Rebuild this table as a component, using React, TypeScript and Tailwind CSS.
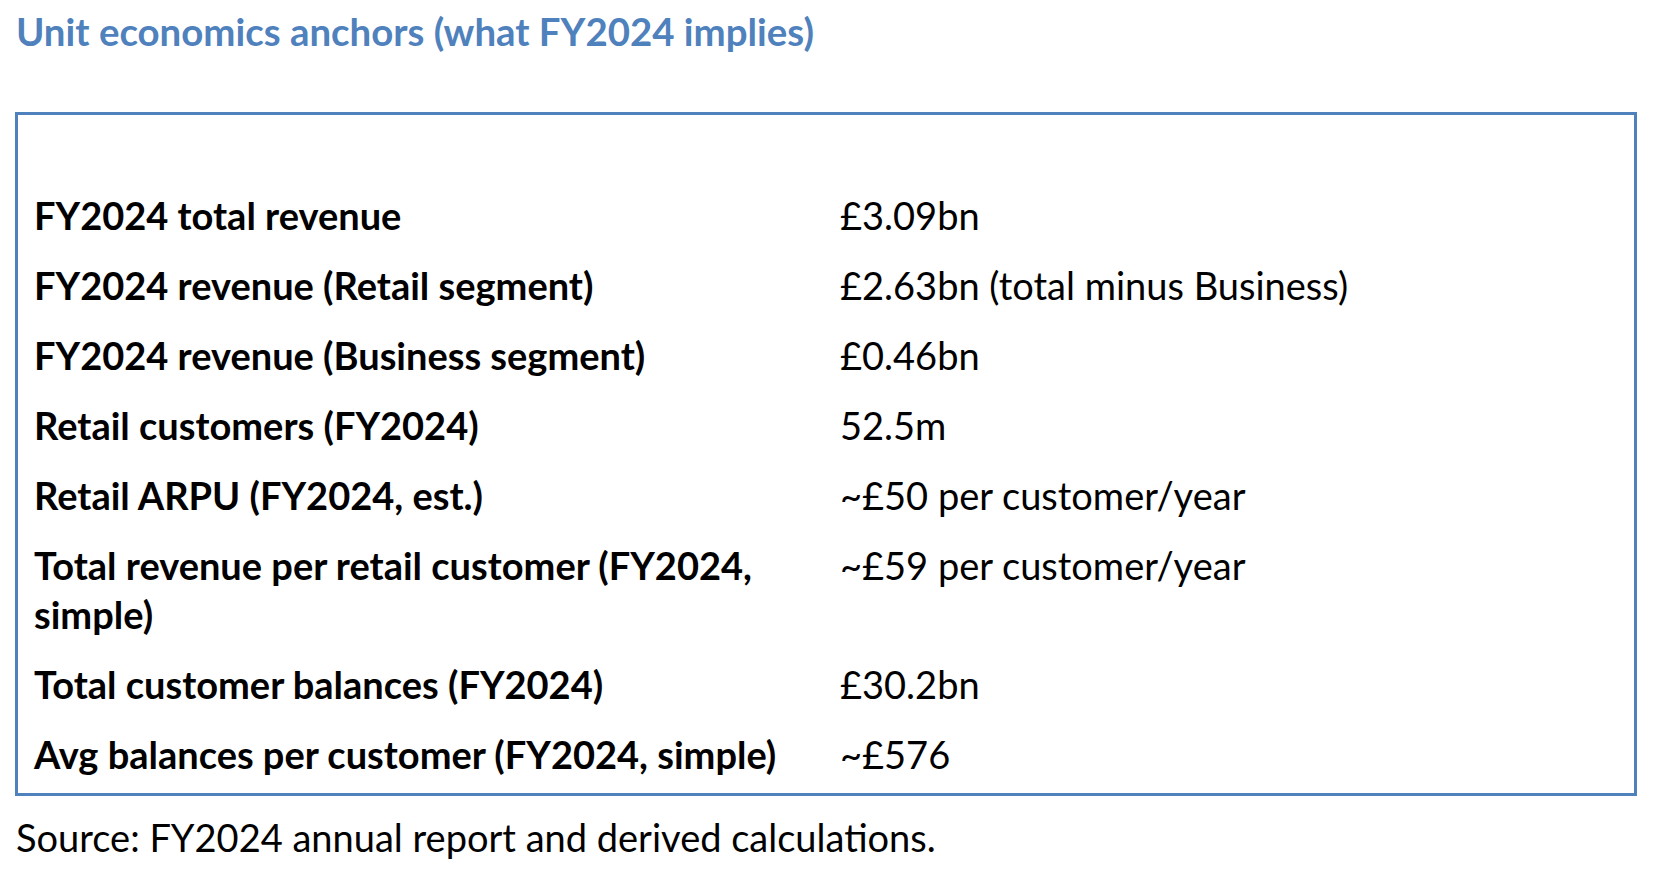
const rows: { label: string; value: string }[] = [
  { label: 'FY2024 total revenue', value: '£3.09bn' },
  { label: 'FY2024 revenue (Retail segment)', value: '£2.63bn (total minus Business)' },
  { label: 'FY2024 revenue (Business segment)', value: '£0.46bn' },
  { label: 'Retail customers (FY2024)', value: '52.5m' },
  { label: 'Retail ARPU (FY2024, est.)', value: '~£50 per customer/year' },
  { label: 'Total revenue per retail customer (FY2024, simple)', value: '~£59 per customer/year' },
  { label: 'Total customer balances (FY2024)', value: '£30.2bn' },
  { label: 'Avg balances per customer (FY2024, simple)', value: '~£576' },
]

export default function App() {
  return (
    <div className="w-[1662px] h-[896px] bg-white text-black font-['Lato','Liberation_Sans',sans-serif] overflow-hidden">
      <div className="pl-[16px] pt-[7px] h-[112px]">
        <h2 className="text-[38.4px] leading-[48px] font-bold text-[#4f81bd]">
          Unit economics anchors (what FY2024 implies)
        </h2>
      </div>

      <div className="ml-[15px] w-[1622px] border-[3px] border-[#4f81bd] pt-[65px] pb-[4px]">
        <div className="grid grid-cols-[822px_1fr]">
          {rows.map((row) => (
            <div key={row.label} className="contents">
              <div className="pl-[16px] pr-[40px] py-[10.5px] text-[38px] leading-[49px] font-bold">
                {row.label}
              </div>
              <div className="py-[10.5px] text-[38px] leading-[49px]">
                {row.value}
              </div>
            </div>
          ))}
        </div>
      </div>

      <p className="pl-[16px] pt-[17px] text-[38px] leading-[49px]">
        Source: FY2024 annual report and derived calculations.
      </p>
    </div>
  )
}
